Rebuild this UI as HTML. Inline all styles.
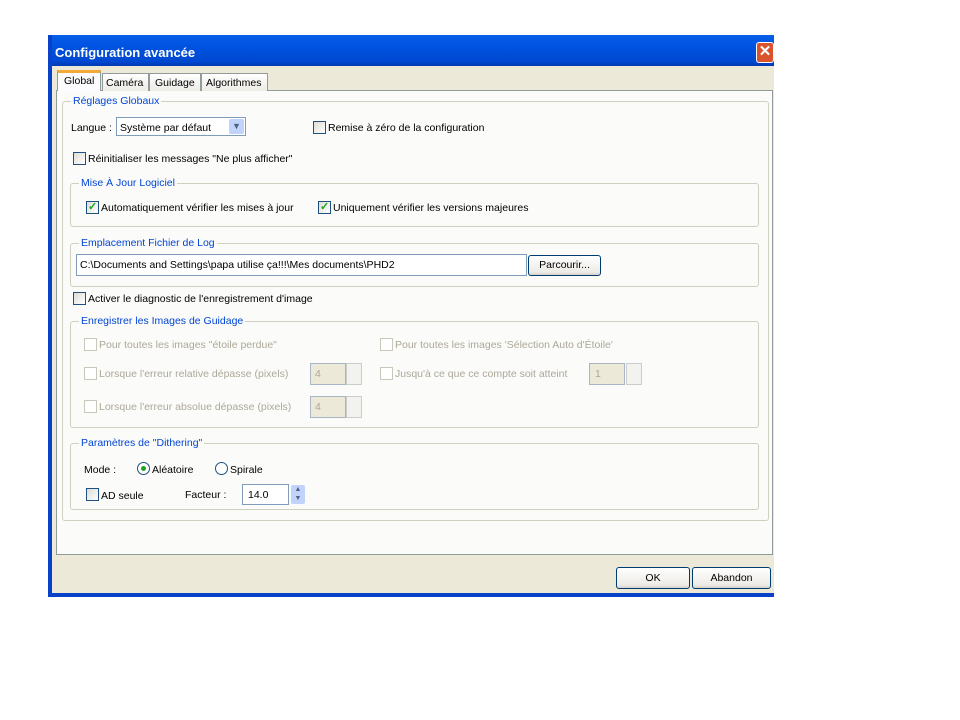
<!DOCTYPE html>
<html><head><meta charset="utf-8"><style>
body{margin:0;width:960px;height:720px;background:#fff;position:relative;overflow:hidden;font-family:"Liberation Sans",sans-serif;font-size:10.5px;color:#000}
.a{position:absolute}
.grp{position:absolute;border:1px solid #d0d0bf;border-radius:3px}
.gt{position:absolute;background:#fbfbf9;color:#0046d5;padding:0 2px;top:-7px;left:8px;white-space:nowrap}
.cb{position:absolute;width:11px;height:11px;border:1px solid #1c5180;background:linear-gradient(135deg,#dcdcd7,#fff)}
.cb.d{border-color:#c9c7ba;background:#fff}
.t{position:absolute;white-space:nowrap}
.dis{color:#aca899}
.btn{position:absolute;border:1px solid #003c74;border-radius:3px;background:linear-gradient(#fff,#ecebe6 85%,#d6d0c5);text-align:center;line-height:20px}
.chk{position:absolute;left:1px;top:-2px;color:#21a121;font-size:11px;font-weight:bold}
.spin{position:absolute;width:14px;border:1px solid #ccc;background:#f2f2ee}
</style></head><body>
<div class="a" style="left:48px;top:35px;width:726px;height:562px;background:#ece9d8"></div>
<div class="a" style="left:48px;top:35px;width:726px;height:31px;background:linear-gradient(#0a5fe6,#0054e3 30%,#0048d0 85%,#0039b3)"></div>
<div class="a" style="left:48px;top:35px;width:4px;height:562px;background:#0842c8"></div>
<div class="a" style="left:48px;top:593px;width:726px;height:4px;background:#0842c8"></div>
<div class="t" style="left:55px;top:45px;color:#fff;font-weight:bold;font-size:13px">Configuration avancée</div>
<div class="a" style="left:756px;top:42px;width:18px;height:21px;background:#d9542d;border:1px solid #fff;border-radius:3px;box-sizing:border-box;color:#fff;font-weight:bold;font-size:15px;line-height:18px;text-align:center">✕</div>
<div class="a" style="left:56px;top:90px;width:715px;height:463px;background:#fbfbf9;border:1px solid #919b9c"></div>
<div class="a" style="left:57px;top:70px;width:44px;height:21px;background:#fcfcfe;border:1px solid #919b9c;border-bottom:none;border-top:3px solid #f3a939;box-sizing:border-box;"></div>
<div class="t" style="left:64px;top:75px">Global</div>
<div class="a" style="left:102px;top:73px;width:45px;height:17px;background:linear-gradient(#fff,#ecebe5);border:1px solid #919b9c;border-bottom:none"></div>
<div class="t" style="left:106px;top:77px">Caméra</div>
<div class="a" style="left:149px;top:73px;width:50px;height:17px;background:linear-gradient(#fff,#ecebe5);border:1px solid #919b9c;border-bottom:none"></div>
<div class="t" style="left:155px;top:77px">Guidage</div>
<div class="a" style="left:201px;top:73px;width:65px;height:17px;background:linear-gradient(#fff,#ecebe5);border:1px solid #919b9c;border-bottom:none"></div>
<div class="t" style="left:206px;top:77px">Algorithmes</div>
<div class="grp" style="left:62px;top:101px;width:705px;height:418px"><div class="gt">Réglages Globaux</div></div>
<div class="t" style="left:71px;top:122px">Langue :</div>
<div class="a" style="left:116px;top:117px;width:130px;height:19px;border:1px solid #7f9db9;background:#fff;box-sizing:border-box"></div>
<div class="t" style="left:120px;top:122px">Système par défaut</div>
<div class="a" style="left:229px;top:119px;width:15px;height:15px;background:#c1d3fb;border-radius:2px;color:#4d6185;font-size:9px;text-align:center;line-height:15px">▼</div>
<div class="cb" style="left:313px;top:121px"></div><div class="t" style="left:328px;top:122px">Remise à zéro de la configuration</div>
<div class="cb" style="left:73px;top:152px"></div><div class="t" style="left:88px;top:153px">Réinitialiser les messages "Ne plus afficher"</div>
<div class="grp" style="left:70px;top:183px;width:687px;height:42px"><div class="gt">Mise À Jour Logiciel</div></div>
<div class="cb" style="left:86px;top:201px"><span class="chk">✓</span></div><div class="t" style="left:101px;top:202px">Automatiquement vérifier les mises à jour</div>
<div class="cb" style="left:318px;top:201px"><span class="chk">✓</span></div><div class="t" style="left:333px;top:202px">Uniquement vérifier les versions majeures</div>
<div class="grp" style="left:70px;top:243px;width:687px;height:42px"><div class="gt">Emplacement Fichier de Log</div></div>
<div class="a" style="left:76px;top:254px;width:451px;height:22px;border:1px solid #7f9db9;background:#fff;box-sizing:border-box"></div>
<div class="t" style="left:80px;top:259px">C:\Documents and Settings\papa utilise ça!!!\Mes documents\PHD2</div>
<div class="btn" style="left:528px;top:255px;width:71px;height:19px;line-height:19px">Parcourir...</div>
<div class="cb" style="left:73px;top:292px"></div><div class="t" style="left:88px;top:293px">Activer le diagnostic de l'enregistrement d'image</div>
<div class="grp" style="left:70px;top:321px;width:687px;height:105px"><div class="gt">Enregistrer les Images de Guidage</div></div>
<div class="cb d" style="left:84px;top:338px"></div><div class="t dis" style="left:99px;top:339px">Pour toutes les images "étoile perdue"</div>
<div class="cb d" style="left:380px;top:338px"></div><div class="t dis" style="left:395px;top:339px">Pour toutes les images 'Sélection Auto d'Étoile'</div>
<div class="cb d" style="left:84px;top:367px"></div><div class="t dis" style="left:99px;top:368px">Lorsque l'erreur relative dépasse (pixels)</div>
<div class="a" style="left:310px;top:363px;width:34px;height:20px;border:1px solid #a7b5c6;background:#ece9d8"></div><div class="t dis" style="left:315px;top:368px">4</div>
<div class="spin" style="left:346px;top:363px;height:20px"></div>
<div class="cb d" style="left:380px;top:367px"></div><div class="t dis" style="left:395px;top:368px">Jusqu'à ce que ce compte soit atteint</div>
<div class="a" style="left:589px;top:363px;width:34px;height:20px;border:1px solid #a7b5c6;background:#ece9d8"></div><div class="t dis" style="left:595px;top:368px">1</div>
<div class="spin" style="left:626px;top:363px;height:20px"></div>
<div class="cb d" style="left:84px;top:400px"></div><div class="t dis" style="left:99px;top:401px">Lorsque l'erreur absolue dépasse (pixels)</div>
<div class="a" style="left:310px;top:396px;width:34px;height:20px;border:1px solid #a7b5c6;background:#ece9d8"></div><div class="t dis" style="left:315px;top:401px">4</div>
<div class="spin" style="left:346px;top:396px;height:20px"></div>
<div class="grp" style="left:70px;top:443px;width:687px;height:65px"><div class="gt">Paramètres de "Dithering"</div></div>
<div class="t" style="left:84px;top:464px">Mode :</div>
<div class="a" style="left:137px;top:462px;width:11px;height:11px;border:1px solid #1c5180;border-radius:50%;background:#fff"></div>
<div class="a" style="left:141px;top:466px;width:5px;height:5px;border-radius:50%;background:#21a121"></div>
<div class="t" style="left:152px;top:464px">Aléatoire</div>
<div class="a" style="left:215px;top:462px;width:11px;height:11px;border:1px solid #1c5180;border-radius:50%;background:#fff"></div>
<div class="t" style="left:230px;top:464px">Spirale</div>
<div class="cb" style="left:86px;top:488px"></div><div class="t" style="left:101px;top:490px">AD seule</div>
<div class="t" style="left:185px;top:489px">Facteur :</div>
<div class="a" style="left:242px;top:484px;width:47px;height:21px;border:1px solid #7f9db9;background:#fff;box-sizing:border-box"></div>
<div class="t" style="left:248px;top:489px">14.0</div>
<div class="a" style="left:291px;top:485px;width:14px;height:19px;background:#c1d3fb;border-radius:2px;color:#4d6185;font-size:7px;line-height:9px;text-align:center">▲<br>▼</div>
<div class="btn" style="left:616px;top:567px;width:72px;height:20px">OK</div>
<div class="btn" style="left:692px;top:567px;width:77px;height:20px">Abandon</div>
</body></html>
